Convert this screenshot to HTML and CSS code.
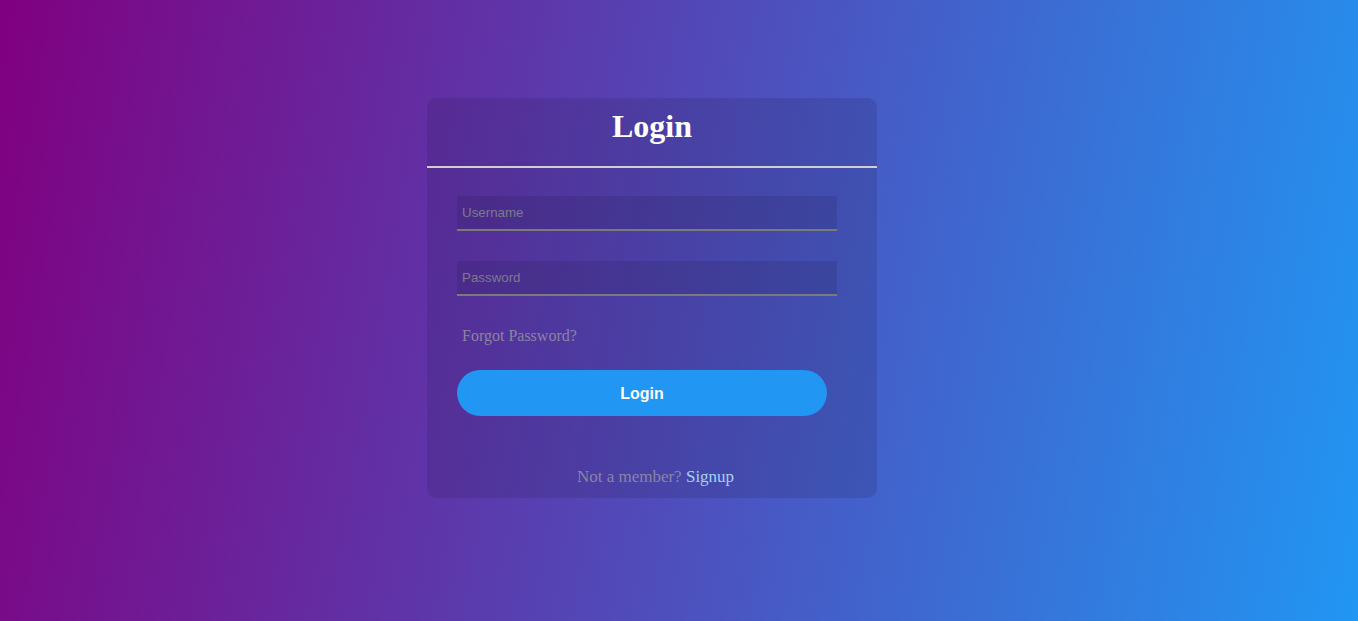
FILE: index.html
```html
<!DOCTYPE html>
<html>
<head>
<meta charset="utf-8">
<title>Login</title>
<link rel="stylesheet" href="styles.css">
</head>
<body>
<div class="page">
  <div class="card">
    <h1 class="title">Login</h1>
    <form class="form">
      <input class="field" type="text" placeholder="Username">
      <input class="field" type="password" placeholder="Password">
      <div class="forgot">Forgot Password?</div>
      <button class="btn" type="button">Login</button>
      <div class="signup">Not a member? <a class="signup-link" href="#">Signup</a></div>
    </form>
  </div>
</div>
</body>
</html>
```
FILE: styles.css
```css
html, body {
  margin: 0;
  padding: 0;
  height: 100%;
}
body {
  background: linear-gradient(100deg, #800080 0%, #2196f3 100%);
  font-family: "Liberation Serif", serif;
  overflow: hidden;
}
.page {
  display: flex;
  justify-content: flex-start;
  padding: 98px 0 0 427px;
}
.card {
  width: 450px;
  height: 400px;
  box-sizing: border-box;
  background: rgba(30, 20, 60, 0.15);
  border-radius: 10px;
  display: flex;
  flex-direction: column;
}
.title {
  margin: 0;
  height: 70px;
  box-sizing: border-box;
  padding-top: 12px;
  text-align: center;
  font-size: 32px;
  font-weight: bold;
  color: #fff;
  line-height: 32px;
  border-bottom: 2px solid #cfcfcf;
}
.form {
  display: flex;
  flex-direction: column;
  padding: 28px 30px 0 30px;
}
.field {
  width: 380px;
  height: 35px;
  box-sizing: border-box;
  border: none;
  border-bottom: 2px solid #7a7a7a;
  background: rgba(30, 20, 60, 0.15);
  padding: 0 5px;
  font-family: "Liberation Sans", Arial, sans-serif;
  font-size: 13.33px;
  color: #ddd;
  outline: none;
  margin-bottom: 30px;
}
.field::placeholder {
  color: #7c7a8e;
}
.forgot {
  margin-top: 0;
  padding-left: 5px;
  font-size: 16px;
  line-height: 20px;
  color: #8a84a2;
}
.btn {
  margin-top: 24px;
  width: 370px;
  height: 46px;
  border: none;
  border-radius: 25px;
  background: #2196f3;
  color: #fff;
  font-family: "Liberation Sans", Arial, sans-serif;
  font-size: 16px;
  font-weight: bold;
  padding-top: 2px;
}
.signup {
  margin-top: 50px;
  text-align: center;
  font-size: 17px;
  line-height: 22px;
  color: #8a84a2;
  padding-left: 7px;
}
.signup-link {
  color: #a6d0f3;
  text-decoration: none;
}
```
